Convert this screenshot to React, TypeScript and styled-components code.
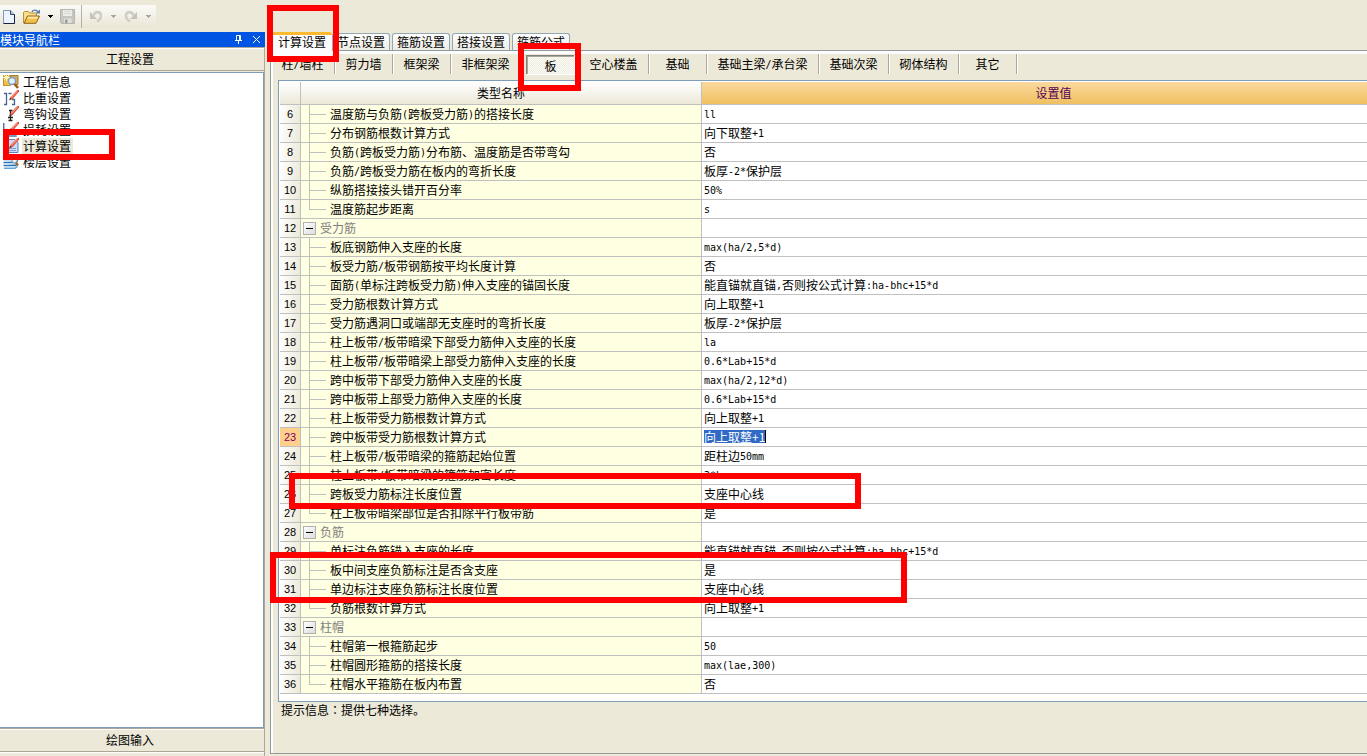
import React from "react";
import styled, { createGlobalStyle, css } from "styled-components";

const GlobalStyle = createGlobalStyle`
  *, *::before, *::after { box-sizing: border-box; }
  html, body { margin: 0; padding: 0; }
  body {
    background: #ece9d8;
    color: #000;
    font: 12px/16px "Noto Sans CJK SC", sans-serif;
    overflow: hidden;
  }
  button, input { font: inherit; color: inherit; margin: 0; padding: 0; border: 0; background: none; border-radius: 0; }
`;

const Page = styled.div`
  position: relative;
  display: flex;
  flex-direction: column;
  min-height: 100vh;
`;

const Toolbar = styled.header`
  display: flex;
  height: 32px;
  padding: 5px 0 4px;
`;

const ToolGroup = styled.div<{ $width: number }>`
  display: flex;
  align-items: center;
  width: ${(p) => p.$width}px;
  padding-left: 2px;
  background: linear-gradient(#fbfaf7, #e9e6d6);
  & + & { border-left: 1px solid #b5b2a3; border-radius: 0 2px 2px 0; padding-left: 5px; }
`;

const ToolButton = styled.button<{ $width: number }>`
  display: flex;
  justify-content: center;
  align-items: center;
  flex: none;
  width: ${(p) => p.$width}px;
  height: 22px;
  svg { flex: none; }
`;

const Body = styled.div`
  display: flex;
  flex: 1;
  align-items: stretch;
`;

const Sidebar = styled.aside`
  display: flex;
  flex-direction: column;
  flex: none;
  width: 265px;
  border-right: 1px solid #aca899;
`;

const SidebarTitle = styled.div`
  display: flex;
  align-items: center;
  height: 15px;
  margin-right: -1px;
  padding-right: 4px;
  background: #0054e3;
  color: #fff;
  span { flex: 1; line-height: 15px; }
`;

const TitleButton = styled.button`
  display: flex;
  margin-left: 9px;
`;

const SectionButton = styled.button`
  height: 24px;
  padding-right: 4px;
  line-height: 20px;
  text-align: center;
  border-top: 1px solid #aca899;
  border-bottom: 1px solid #aca899;
  box-shadow: inset 0 1px #fff;
`;

const NavList = styled.ul`
  flex: 1;
  margin: 1px 0 0;
  padding: 1px 0 0;
  list-style: none;
  background: #fff;
  border: solid #7f9db9;
  border-width: 1px 1px 1px 0;
`;

const NavItem = styled.li`
  display: flex;
  align-items: center;
  height: 16px;
  padding-left: 3px;
`;

const NavLink = styled.a<{ $active?: boolean }>`
  margin-left: 3px;
  padding: 0 2px 0 1px;
  color: #000;
  line-height: 16px;
  text-decoration: none;
  background: ${(p) => (p.$active ? "#ece9d8" : "transparent")};
`;

const SidebarFoot = styled.div`
  height: 4px;
  box-shadow: inset 0 1px #fff;
`;

const Main = styled.main`
  display: flex;
  flex-direction: column;
  flex: 1;
  min-width: 0;
  padding: 0 0 2px 5px;
`;

const TabStrip = styled.nav`
  display: flex;
  align-items: flex-end;
  gap: 2px;
  height: 18px;
  padding-left: 2px;
`;

const Tab = styled.button<{ $active?: boolean }>`
  width: 58px;
  height: 17px;
  line-height: 16px;
  white-space: nowrap;
  border: 1px solid #91a7b4;
  border-bottom: 0;
  border-radius: 3px 3px 0 0;
  background: linear-gradient(#fff, #ecebe4);
  ${(p) =>
    p.$active &&
    css`
      position: relative;
      align-self: flex-start;
      width: 60px;
      height: 24px;
      margin-right: -2px;
      padding-bottom: 8px;
      line-height: 13px;
      border: 0;
      border-top: 3px solid #ffb92e;
      background: #fcfcfe;
    `}
`;

const Panel = styled.section`
  flex: 1;
  display: flex;
  flex-direction: column;
  border: solid #919b9c;
  border-width: 1px 0 1px 1px;
  box-shadow: inset 2px 3px #fcfcfe;
  padding-top: 3px;
`;

const Categories = styled.nav`
  display: flex;
  height: 20px;
`;

const Category = styled.button<{ $width: number; $active?: boolean }>`
  width: ${(p) => p.$width}px;
  height: 20px;
  line-height: 20px;
  white-space: nowrap;
  border-right: 1px solid #aca899;
  box-shadow: 1px 0 #fff;
  ${(p) =>
    p.$active &&
    css`
      height: 19px;
      width: 48px;
      margin: 1px 5px 0;
      border: solid #808080;
      border-width: 1px 0 0 1px;
      box-shadow: inset 1px 1px #aca899, 1px 1px #fff;
      background: repeating-conic-gradient(#fff 0 25%, #ece9d8 0 50%) 0 0 / 2px 2px;
    `}
`;

const GridBox = styled.div`
  margin-top: 6px;
  margin-left: 7px;
  padding: 1px 0 7px 1px;
  background: #fff;
  border: solid #7f9db9;
  border-width: 1px 0 1px 1px;
`;

const Table = styled.table`
  width: 100%;
  table-layout: fixed;
  border-collapse: separate;
  border-spacing: 0;
  th, td { padding: 0; font-weight: 400; text-align: left; border: 0 solid #c0c0c0; border-bottom-width: 1px; white-space: nowrap; }
`;

const HeadCell = styled.th<{ $active?: boolean }>`
  && {
    height: 23px;
    text-align: center;
    border-right-width: ${(p) => (p.$active ? 0 : 1)}px;
    background: ${(p) => (p.$active ? "linear-gradient(#f9d99f, #f0c060)" : "linear-gradient(#fff, #ece9d8)")};
    color: ${(p) => (p.$active ? "#580058" : "#000")};
    padding-left: ${(p) => (p.$active ? 38 : 0)}px;
  }
`;

const NumberCell = styled.th<{ $active?: boolean }>`
  && {
    height: 19px;
    text-align: center;
    border-right-width: 1px;
    font: 11px/18px "Liberation Sans", sans-serif;
    background: ${(p) => (p.$active ? "#ffd08c" : "linear-gradient(100deg, #fff, #ece9d8)")};
    color: ${(p) => (p.$active ? "#800060" : "#000")};
  }
`;

const NameCell = styled.td`
  && { border-right-width: 1px; background: #ffffe1; }
`;

const NameLine = styled.div<{ $group?: boolean }>`
  display: flex;
  height: 18px;
  line-height: 18px;
  color: ${(p) => (p.$group ? "#808080" : "#000")};
  padding-left: ${(p) => (p.$group ? 2 : 8)}px;
`;

const Branch = styled.span<{ $last?: boolean }>`
  display: flex;
  flex-direction: column;
  width: 17px;
  margin-right: 4px;
  &::before { content: ""; height: 10px; border: solid #c0c0c0; border-width: 0 0 1px 1px; }
  &::after { content: ""; height: 8px; border-left: ${(p) => (p.$last ? 0 : 1)}px solid #c0c0c0; }
`;

const Toggle = styled.button`
  display: grid;
  place-items: center;
  width: 13px;
  height: 13px;
  margin: 3px 4px 0 0;
  border: 1px solid #b0b0b0;
  background: linear-gradient(135deg, #fff, #dcdcdc);
  &::before { content: ""; width: 7px; height: 1px; background: #000; }
`;

const ValueCell = styled.td`
  && { height: 19px; padding-left: 2px; line-height: 18px; background: #fff; }
`;

const ValueInput = styled.input`
  display: block;
  width: 62px;
  height: 13px;
  margin-bottom: 2px;
  line-height: 13px;
  color: #fff;
  background: #316ac5;
  border-right: 1px solid #000;
`;

const Latin = styled.span`
  font: 10px/10px "DejaVu Sans Mono", monospace;
  vertical-align: 1px;
`;

const Hint = styled.p`
  margin: 0;
  padding-left: 10px;
`;

/* The TC face sets the full-width colon in the middle of its square. */
const Colon = styled.span`
  font-family: "Noto Sans CJK TC", sans-serif;
  line-height: 1;
`;

const Mark = styled.div<{ $x: number; $y: number; $w: number; $h: number }>`
  position: absolute;
  left: ${(p) => p.$x}px;
  top: ${(p) => p.$y}px;
  width: ${(p) => p.$w}px;
  height: ${(p) => p.$h}px;
  border: 6px solid #f00;
  pointer-events: none;
`;

/* Half-width characters are set in a monospace face, six pixels each. */
const Mixed = ({ text }: { text: string }) => (
  <>
    {text
      .split(/([\x20-\x7e]+)/)
      .filter(Boolean)
      .map((part, i) => (/^[\x20-\x7e]/.test(part) ? <Latin key={i}>{part}</Latin> : part))}
  </>
);

const NewIcon = () => (
  <svg width="12" height="14" viewBox="0 0 12 14">
    <path d="M.5.5h7l4 4v9H.5z" fill="#eef4ff" stroke="#7d97bd" />
    <path d="M7.5.5v4h4" fill="#b5c9e6" stroke="#30486c" />
    <path d="M11.500 4.500v9H.5" fill="none" stroke="#14243f" />
  </svg>
);
const OpenIcon = () => (
  <svg width="18" height="15" viewBox="0 0 18 15">
    <path d="M.5 14V3.500l1-1h4l1 1.500h7V7" fill="#f9dd8c" stroke="#b98f32" />
    <path d="M1 14.300 4.500 7h12L13 14.300z" fill="#f5be48" stroke="#8a6516" />
    <path d="M5 7.800h10l-.8 1.700H4.200z" fill="#ffedb4" />
    <path d="M9 3c1-2.500 4.500-2.500 6 0" fill="none" stroke="#5a7dac" strokeWidth="1.400" />
    <path d="M12.500 4.500H17V.5z" fill="#5a7dac" />
  </svg>
);
const SaveIcon = () => (
  <svg width="15" height="15" viewBox="0 0 15 15">
    <path d="M.5.5h14v14h-13l-1-1z" fill="#c6c6c1" stroke="#b4b4af" />
    <path d="M3 1h9v6H3z" fill="#ededea" />
    <path d="M4 2.500h7M4 4.500h7" stroke="#d6d6d2" />
    <path d="M4 9.500h7.500V14H4z" fill="#e2e2de" />
    <path d="M5 10.500h2.500V14H5z" fill="#9b9b97" />
  </svg>
);
const UndoIcon = ({ flip }: { flip?: boolean }) => (
  <svg width="13" height="13" viewBox="0 0 13 13">
    <g transform={flip ? "matrix(-1 0 0 1 13 0)" : undefined}>
      <path d="M3.500 5.500C5 1 11 1 11 5.500c0 3-1.500 4.500-4 6" fill="none" stroke="#cfcdc6" strokeWidth="2.600" />
      <path d="M0 2v7h7z" fill="#c4c2bb" />
    </g>
  </svg>
);
const Arrow = ({ color = "#aaa79a" }: { color?: string }) => (
  <svg width="5" height="3" viewBox="0 0 5 3">
    <path d="M0 0h5v1H4v1H3v1H2V2H1V1H0z" fill={color} />
  </svg>
);

const Pencil = () => (
  <g>
    <path d="M7.200 7.500 13.500.8 15 0h1v1.500L9.500 9z" fill="#e2452c" />
    <path d="M7.800 7.200 14 .8l.8.600-6.200 6.600z" fill="#ff9c88" />
    <path d="m6 10.500 1.200-3L9.500 9z" fill="#6e3222" />
  </g>
);

const navArt: Record<string, React.ReactNode> = {
  info: (
    <>
      <path d="M.5 1.500h7v10h-7z" fill="#eec04a" stroke="#c08f2a" />
      <path d="M7.500 1.500h7.500v9H7.500z" fill="#cfae62" stroke="#a17b30" />
      <path d="M3.500 0v7M0 3.500h7M1 1l5 5M6 1 1 6" stroke="#fff6bc" />
      <circle cx="9" cy="7" r="3.500" fill="#e2f0ff" stroke="#7f9cc0" strokeWidth="1.400" />
      <path d="m11.500 10 3.500 4" stroke="#a35c12" strokeWidth="2.600" />
    </>
  ),
  weight: (
    <>
      <path d="M1 3.500h2.500v11H1M7 3.500H5.500M9 9.500h2.500v5H9M7 3.500h1.500" fill="none" stroke="#47658f" strokeWidth="1.300" />
      <Pencil />
    </>
  ),
  hook: (
    <>
      <path d="M6 4.500h3.500M7.500 5v9M5.500 14.500h4M5 11.500h5" stroke="#222" strokeWidth="1.300" />
      <Pencil />
    </>
  ),
  loss: (
    <>
      <path d="M.7 1v13h13M3 7l2 3 3-3 2 4" fill="none" stroke="#4c6fae" strokeWidth="1.500" />
      <Pencil />
    </>
  ),
  calc: (
    <>
      <path d="M1.500 1.500h10l3.500 3v10H1.500z" fill="#cbdcf8" stroke="#5e80bc" />
      <path d="M4 10.500h9M4 12.500h9" stroke="#7fa0d8" />
      <Pencil />
    </>
  ),
  floor: (
    <>
      <path d="M1 3.500 4 1h11l-3 2.500zM.5 5.500h12l2.500-2M.5 8.500h12l2.500-2M.5 11.500h12l2.500-2" fill="#a9d4f7" stroke="#2b74b6" strokeWidth="1.600" />
      <path d="M1 14.300h11l2.500-2" fill="none" stroke="#5fa5dc" strokeWidth="1.600" />
      <circle cx="11.500" cy="6.500" r="2.500" fill="#e8eff5" stroke="#8b8f94" />
      <path d="m13 8.500 2 3" stroke="#a3651c" strokeWidth="2" />
    </>
  ),
};

const navItems = [
  ["info", "工程信息"],
  ["weight", "比重设置"],
  ["hook", "弯钩设置"],
  ["loss", "损耗设置"],
  ["calc", "计算设置"],
  ["floor", "楼层设置"],
];

const tabs = ["计算设置", "节点设置", "箍筋设置", "搭接设置", "箍筋公式"];

const categories: [string, number][] = [
  ["柱/墙柱", 64],
  ["剪力墙", 58],
  ["框架梁", 58],
  ["非框架梁", 70],
  ["板", 58],
  ["空心楼盖", 70],
  ["基础", 58],
  ["基础主梁/承台梁", 112],
  ["基础次梁", 70],
  ["砌体结构", 70],
  ["其它", 58],
];

type Row = { name: string; value?: string; group?: boolean };
const rows: Row[] = [
  { name: "温度筋与负筋(跨板受力筋)的搭接长度", value: "ll" },
  { name: "分布钢筋根数计算方式", value: "向下取整+1" },
  { name: "负筋(跨板受力筋)分布筋、温度筋是否带弯勾", value: "否" },
  { name: "负筋/跨板受力筋在板内的弯折长度", value: "板厚-2*保护层" },
  { name: "纵筋搭接接头错开百分率", value: "50%" },
  { name: "温度筋起步距离", value: "s" },
  { name: "受力筋", group: true },
  { name: "板底钢筋伸入支座的长度", value: "max(ha/2,5*d)" },
  { name: "板受力筋/板带钢筋按平均长度计算", value: "否" },
  { name: "面筋(单标注跨板受力筋)伸入支座的锚固长度", value: "能直锚就直锚,否则按公式计算:ha-bhc+15*d" },
  { name: "受力筋根数计算方式", value: "向上取整+1" },
  { name: "受力筋遇洞口或端部无支座时的弯折长度", value: "板厚-2*保护层" },
  { name: "柱上板带/板带暗梁下部受力筋伸入支座的长度", value: "la" },
  { name: "柱上板带/板带暗梁上部受力筋伸入支座的长度", value: "0.6*Lab+15*d" },
  { name: "跨中板带下部受力筋伸入支座的长度", value: "max(ha/2,12*d)" },
  { name: "跨中板带上部受力筋伸入支座的长度", value: "0.6*Lab+15*d" },
  { name: "柱上板带受力筋根数计算方式", value: "向上取整+1" },
  { name: "跨中板带受力筋根数计算方式", value: "向上取整+1" },
  { name: "柱上板带/板带暗梁的箍筋起始位置", value: "距柱边50mm" },
  { name: "柱上板带/板带暗梁的箍筋加密长度", value: "3*h" },
  { name: "跨板受力筋标注长度位置", value: "支座中心线" },
  { name: "柱上板带暗梁部位是否扣除平行板带筋", value: "是" },
  { name: "负筋", group: true },
  { name: "单标注负筋锚入支座的长度", value: "能直锚就直锚,否则按公式计算:ha-bhc+15*d" },
  { name: "板中间支座负筋标注是否含支座", value: "是" },
  { name: "单边标注支座负筋标注长度位置", value: "支座中心线" },
  { name: "负筋根数计算方式", value: "向上取整+1" },
  { name: "柱帽", group: true },
  { name: "柱帽第一根箍筋起步", value: "50" },
  { name: "柱帽圆形箍筋的搭接长度", value: "max(lae,300)" },
  { name: "柱帽水平箍筋在板内布置", value: "否" },
];
const firstNumber = 6;
const editedNumber = 23;

export default function App() {
  return (
    <Page>
      <GlobalStyle />
      <Toolbar>
        <ToolGroup $width={81}>
          <ToolButton $width={14} aria-label="新建"><NewIcon /></ToolButton>
          <ToolButton $width={32} aria-label="打开"><OpenIcon /></ToolButton>
          <ToolButton $width={5} aria-label="打开列表"><Arrow color="#000" /></ToolButton>
          <ToolButton $width={28} aria-label="保存"><SaveIcon /></ToolButton>
        </ToolGroup>
        <ToolGroup $width={75}>
          <ToolButton $width={18} aria-label="撤销"><UndoIcon /></ToolButton>
          <ToolButton $width={16} aria-label="撤销列表"><Arrow /></ToolButton>
          <ToolButton $width={18} aria-label="恢复"><UndoIcon flip /></ToolButton>
          <ToolButton $width={18} aria-label="恢复列表"><Arrow /></ToolButton>
        </ToolGroup>
      </Toolbar>
      <Body>
        <Sidebar>
          <SidebarTitle>
            <span>模块导航栏</span>
            <TitleButton aria-label="固定">
              <svg width="9" height="9" viewBox="0 0 9 9">
                <path d="M2.500 5V.5h4V5M1 5.500h7M4.500 6v3M5.500 1v4" fill="none" stroke="#fff" />
              </svg>
            </TitleButton>
            <TitleButton aria-label="关闭">
              <svg width="9" height="9" viewBox="0 0 9 9">
                <path d="m1 1 7 7M8 1 1 8" stroke="#fff" />
              </svg>
            </TitleButton>
          </SidebarTitle>
          <SectionButton>工程设置</SectionButton>
          <NavList>
            {navItems.map(([icon, label]) => (
              <NavItem key={icon}>
                <svg width="16" height="16" viewBox="0 0 16 16">{navArt[icon]}</svg>
                <NavLink href="#" $active={icon === "calc"}>{label}</NavLink>
              </NavItem>
            ))}
          </NavList>
          <SectionButton>绘图输入</SectionButton>
          <SidebarFoot />
        </Sidebar>
        <Main>
          <TabStrip>
            {tabs.map((t, i) => (
              <Tab key={t} $active={i === 0}>{t}</Tab>
            ))}
          </TabStrip>
          <Panel>
            <Categories>
              {categories.map(([label, width]) => (
                <Category key={label} $width={width} $active={label === "板"}>
                  <Mixed text={label} />
                </Category>
              ))}
            </Categories>
            <GridBox>
              <Table>
                <colgroup>
                  <col style={{ width: 21 }} />
                  <col style={{ width: 401 }} />
                  <col />
                </colgroup>
                <thead>
                  <tr>
                    <HeadCell />
                    <HeadCell>类型名称</HeadCell>
                    <HeadCell $active>设置值</HeadCell>
                  </tr>
                </thead>
                <tbody>
                  {rows.map((row, i) => {
                    const number = firstNumber + i;
                    const next = rows[i + 1];
                    return (
                      <tr key={number}>
                        <NumberCell $active={number === editedNumber}>{number}</NumberCell>
                        <NameCell>
                          <NameLine $group={row.group}>
                            {row.group ? <Toggle aria-label="折叠" /> : <Branch $last={!next || next.group} />}
                            <span><Mixed text={row.name} /></span>
                          </NameLine>
                        </NameCell>
                        <ValueCell>
                          {number === editedNumber ? (
                            <ValueInput aria-label={row.name} defaultValue={row.value} />
                          ) : (
                            <Mixed text={row.value ?? ""} />
                          )}
                        </ValueCell>
                      </tr>
                    );
                  })}
                </tbody>
              </Table>
            </GridBox>
            <Hint>提示信息<Colon>：</Colon>提供七种选择。</Hint>
          </Panel>
        </Main>
      </Body>
      <Mark $x={267} $y={5} $w={72} $h={57} />
      <Mark $x={518} $y={43} $w={63} $h={48} />
      <Mark $x={3} $y={129} $w={112} $h={31} />
      <Mark $x={289} $y={473} $w={572} $h={36} />
      <Mark $x={270} $y={552} $w={637} $h={51} />
    </Page>
  );
}
